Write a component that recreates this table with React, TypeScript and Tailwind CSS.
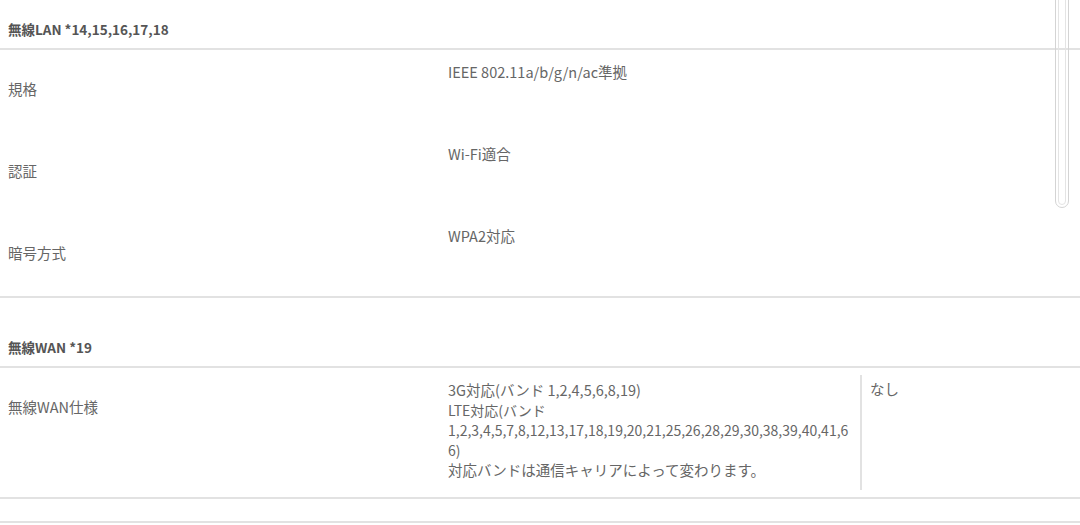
const font = { fontFamily: '"Noto Sans CJK JP", "Noto Sans", sans-serif' };

type Row = {
  label: string;
  value: string[];
  extra?: string;
};

const lanRows: Row[] = [
  { label: "規格", value: ["IEEE 802.11a/b/g/n/ac準拠"] },
  { label: "認証", value: ["Wi-Fi適合"] },
  { label: "暗号方式", value: ["WPA2対応"] },
];

const wanRows: Row[] = [
  {
    label: "無線WAN仕様",
    value: [
      "3G対応(バンド 1,2,4,5,6,8,19)",
      "LTE対応(バンド 1,2,3,4,5,7,8,12,13,17,18,19,20,21,25,26,28,29,30,38,39,40,41,66)",
      "対応バンドは通信キャリアによって変わります。",
    ],
    extra: "なし",
  },
];

const SpecRow = ({ row }: { row: Row }) => (
  <div className="flex">
    <div className="w-[448px] shrink-0 pl-2 pt-[30px] pb-[34px] text-[14.5px] leading-[18px] text-[#666]">
      {row.label}
    </div>
    <div
      className={
        (row.extra ? "w-[412px] shrink-0 pb-[17px] " : "flex-1 pb-[18px] ") +
        "pt-[12px] pr-[6px] text-[14.5px] leading-[20px] text-[#666] [overflow-wrap:anywhere]"
      }
    >
      {row.value.map((v, i) => (
        // long band lists are a touch narrower so they wrap like the original
        <div key={i} className={v.length > 40 ? "text-[14px]" : ""}>
          {v}
        </div>
      ))}
    </div>
    {row.extra && (
      <div className="flex-1 my-[7px] border-l-2 border-[#e2e2e2] pl-2 pt-[4px] text-[14.5px] leading-[20px] text-[#666]">
        {row.extra}
      </div>
    )}
  </div>
);

const Section = ({ title, rows, top }: { title: string; rows: Row[]; top: string }) => (
  <div className="border-b-2 border-[#e2e2e2]">
    <div
      className={
        top +
        " pb-[10px] pl-2 text-[13.5px] leading-[18px] font-semibold text-[#555] border-b-2 border-[#e2e2e2]"
      }
    >
      {title}
    </div>
    {rows.map((r) => (
      <SpecRow key={r.label} row={r} />
    ))}
  </div>
);

export default function App() {
  return (
    <div className="relative w-[1080px] h-[525px] overflow-hidden bg-white" style={font}>
      <Section title="無線LAN *14,15,16,17,18" rows={lanRows} top="pt-[20px]" />
      <Section title="無線WAN *19" rows={wanRows} top="pt-[40px]" />
      <div className="h-[24px] border-b-2 border-[#e2e2e2]" />

      {/* scrollbar */}
      <div className="absolute left-[1055px] top-[-20px] w-[14px] h-[228px] rounded-full border border-[#d4d4d4] p-[2px]">
        <div className="w-full h-full rounded-full border border-[#e4e4e4]" />
      </div>
    </div>
  );
}
